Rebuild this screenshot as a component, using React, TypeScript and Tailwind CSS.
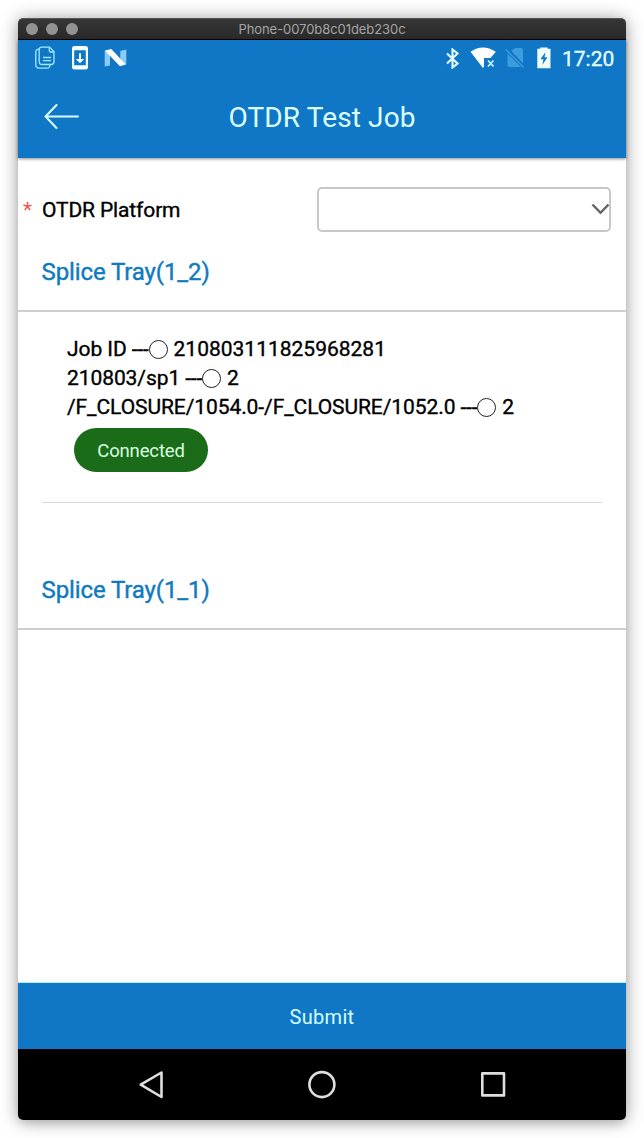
import React from "react";

function StatusBar() {
  return (
    <div className="flex h-9 items-center justify-between pl-[17px] pr-3">
      <div className="flex items-center text-[#e2ffff]">
        <svg width="20" height="24" viewBox="0 0 20 24" fill="none" stroke="#9eeaff" strokeWidth="1.3">
          <path d="M7 1.1h7.6l4.4 4.6v9.8q0 3-3 3H7.200q-3 0-3-3V3.900q0-2.800 2.800-2.800Z" />
          <path d="M14.300 1.300v3q0 1.700 1.700 1.700h3M4.200 3.200H3.800Q.8 3.200.8 6.200v12.600q0 3.400 3.400 3.400h7.900q2.600 0 3-3.500M8 11.500h8M8 14.600h8" />
        </svg>
        <svg className="ml-[17px]" width="16" height="24" viewBox="0 0 16 24">
          <path fill="#f4ffff" fillRule="evenodd" d="M2.500 0h11Q16 0 16 2.500v18.500q0 2.500-2.500 2.500h-11Q0 23.500 0 21V2.500Q0 0 2.500 0ZM2.200 4.300v15h11.600v-15ZM7 7.300h2v5.800h3.200L8 17.200l-4.200-4.100H7Z" />
        </svg>
        <svg className="ml-4" width="23" height="20" viewBox="0 0 23 20">
          <path fill="#8accf5" d="M.7 2.800 6 5v12.500L.7 18.500ZM16.300 3l6-1.500v14.800l-6 .5Z" />
          <path fill="#fff" d="M.9 2.600 7.300 1l14.500 15.500-5.900 1.800Z" />
        </svg>
      </div>
      <div className="flex items-center text-[#e6ffff]">
        <svg width="13" height="21" viewBox="0 0 13 21" fill="none" stroke="#e2ffff" strokeWidth="2.100">
          <path d="m1 5.500 10.500 10L6.500 19.500V1.500l5 4L1 15.500" />
        </svg>
        <svg className="ml-[11px]" width="27" height="22" viewBox="0 0 27 22">
          <path fill="#fff" d="M.5 4.800Q12.800-4 25.800 4.800L20.500 11H14v8.500l-1 1.500Z" />
          <path d="m18 13.500 5.500 6m0-6-5.500 6" stroke="#c8f2ff" strokeWidth="1.800" fill="none" />
        </svg>
        <svg className="ml-2" width="20" height="22" viewBox="0 0 20 22">
          <path fill="#3b9cde" d="M10 1h6q2 0 2 2v13.500L6.200 3.800ZM2.500 6.500 16 20H4.500q-2 0-2-2Z" />
          <path d="m.7 2.500 18 18" stroke="#3b9cde" strokeWidth="1.400" />
        </svg>
        <svg className="ml-[12.500px]" width="14" height="22" viewBox="0 0 14 22">
          <path fill="#f0ffff" fillRule="evenodd" d="M3.300 1.700V.5h7.300v1.200h2.900v19.500H.3V1.700ZM8.500 5 3.500 12.300h3L5.300 18l5.200-7.700h-3Z" />
        </svg>
        <span className="ml-[11px] w-[52px] whitespace-nowrap pt-px text-[21px] leading-6 [-webkit-text-stroke:0.3px]">17:20</span>
      </div>
    </div>
  );
}

function TrayTitle({ children }: { children: React.ReactNode }) {
  return (
    <h2 className="flex h-[78px] items-center border-b-2 border-[#cecece] pl-[23.500px] text-[24px] leading-7 tracking-[-0.110px] text-[#107abf] [-webkit-text-stroke:0.4px]">
      {children}
    </h2>
  );
}

function Ring() {
  return <span className="mr-1.5 inline-block size-[19px] shrink-0 rounded-full border border-[#222]" />;
}

function JobLine({ label, value }: { label: string; value: string }) {
  return (
    <div className="flex h-[29px] items-center whitespace-nowrap">
      <span className="tracking-[-0.080px]">{label}&nbsp;</span>
      <span className="tracking-[-0.200px]">---</span>
      <Ring />
      <span>{value}</span>
    </div>
  );
}

export default function App() {
  return (
    <div className="h-[1138px] w-[644px] overflow-hidden bg-white p-[18px] font-['Roboto',sans-serif]">
      <div className="flex h-[1102px] w-[608px] flex-col rounded-[5px] shadow-[0_1px_18px_rgba(0,0,0,0.380),0_4px_8px_rgba(0,0,0,0.080)]">
        <div className="grid h-[22px] shrink-0 grid-cols-[1fr_auto_1fr] items-center rounded-t-[5px] border-b border-t border-b-black border-t-[#555] bg-linear-to-b from-[#363636] to-[#292929] px-2">
          <div className="flex gap-2">
            <i className="size-3 rounded-full bg-[#929292]" />
            <i className="size-3 rounded-full bg-[#929292]" />
            <i className="size-3 rounded-full bg-[#929292]" />
          </div>
          <span className="font-['Inter',sans-serif] text-[13px] leading-5 tracking-[-0.060px] text-[#a5a5a5]">Phone-0070b8c01deb230c</span>
        </div>

        <header className="z-10 h-[118px] shrink-0 bg-[#1077c7] shadow-[0_1px_3px_rgba(0,0,0,0.450)]">
          <StatusBar />
          <div className="grid h-[82px] grid-cols-[1fr_auto_1fr] items-center pl-[26px] pr-[26px]">
            <svg width="36" height="26" viewBox="0 0 36 26" fill="none" stroke="#d8ffff" strokeWidth="2" strokeLinecap="round" strokeLinejoin="round">
              <path d="M12.500 1 1.500 12.500l11 11.500M1.500 12.500h32.500" />
            </svg>
            <h1 className="pt-[2px] text-[28px] leading-8 tracking-[0.130px] text-[#dbffff]">OTDR Test Job</h1>
          </div>
        </header>

        <main className="flex-1 bg-white text-black">
          <div className="flex h-[75px] items-end justify-between pl-[5px] pr-[15px] pb-[1.500px]">
            <div className="flex h-11 items-center pt-[3px] text-[21px]">
              <span className="w-[19px] text-[#f0574f]">*</span>
              <label className="tracking-[-0.130px] [-webkit-text-stroke:0.35px]">OTDR Platform</label>
            </div>
            <button aria-label="OTDR Platform" className="flex h-[45px] w-[294px] items-center justify-end rounded-[5px] border-2 border-[#c8c8c8] bg-white">
              <svg width="18" height="12" viewBox="0 0 18 12" fill="none" stroke="#666" strokeWidth="2.500">
                <path d="m1.500 1.500 8 8.300 8-8.300" />
              </svg>
            </button>
          </div>
          <div className="pt-px">
            <TrayTitle>Splice Tray(1_2)</TrayTitle>
          </div>
          <section className="h-60 px-6 pt-[23px]">
            <div className="pl-[25px] text-[21px] leading-[29px]">
              <div className="[-webkit-text-stroke:0.35px]">
                <JobLine label="Job ID" value="210803111825968281" />
                <JobLine label="210803/sp1" value="2" />
                <JobLine label="/F_CLOSURE/1054.0-/F_CLOSURE/1052.0" value="2" />
              </div>
              <button className="ml-[7px] mt-[6px] flex h-11 w-[134px] items-center justify-center rounded-full bg-[#1b6c19] pt-0.5 text-[18.500px] tracking-[-0.150px] text-[#d9ffe0]">
                Connected
              </button>
            </div>
            <hr className="mt-[29.500px] border-t border-[#d8d8d8]" />
          </section>
          <TrayTitle>Splice Tray(1_1)</TrayTitle>
        </main>

        <button className="h-[67px] shrink-0 border-t border-[#a8efff] bg-[#1077c7] pt-0.5 text-[20px] tracking-[0.300px] text-[#d3ffff]">Submit</button>
        <nav className="grid h-[71px] shrink-0 grid-cols-[171px_171px_171px] place-content-center justify-items-center rounded-b-[5px] bg-black">
          <svg width="30" height="31" viewBox="0 0 30 31" fill="none" stroke="#dedede" strokeWidth="2.600" strokeLinejoin="round">
            <path d="M25.500 3.500v24.500L4.700 15.700Z" />
          </svg>
          <svg width="30" height="31" viewBox="0 0 30 31" fill="none" stroke="#dedede" strokeWidth="2.600">
            <circle cx="14.900" cy="15.600" r="12.500" />
          </svg>
          <svg width="30" height="31" viewBox="0 0 30 31" fill="none" stroke="#dedede" strokeWidth="2.600" strokeLinejoin="round">
            <path d="M4.300 4.400H26v22H4.300Z" />
          </svg>
        </nav>
      </div>
    </div>
  );
}
